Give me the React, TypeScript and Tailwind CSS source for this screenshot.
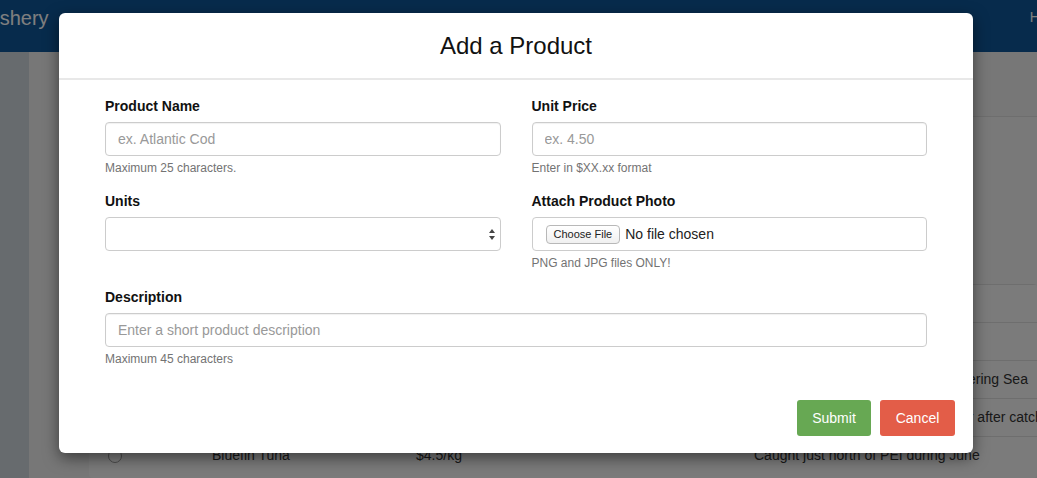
import React from 'react';

const rows = [
  { name: '', price: '', note: 'Caught off the coasts of Halifax, in' },
  { name: '', price: '', note: 'Farmed in New Brunswick' },
  { name: '', price: '', note: 'Wild caught in the cold, northern Bering Sea' },
  { name: '', price: '', note: 'Processed and frozen within 1 hour after catch' },
  { name: 'Bluefin Tuna', price: '$4.5/kg', note: 'Caught just north of PEI during June' },
];

const Field = ({ label, help, children }: { label: string; help?: string; children: React.ReactNode }) => (
  <div className="flex flex-col">
    <label className="text-[14px] font-bold leading-[20px] text-[#111]">{label}</label>
    <div className="mt-[6px]">{children}</div>
    {help && <p className="mt-[4px] text-[12px] leading-[16px] text-[#737373]">{help}</p>}
  </div>
);

const inputCls =
  'block w-full h-[34px] rounded-[4px] border border-[#cccccc] bg-white px-[12px] text-[14px] text-[#555] placeholder:text-[#999] outline-none shadow-[inset_0_1px_1px_rgba(0,0,0,0.06)]';

const ProductModal = () => (
  <div className="ml-[59px] mt-[13px] w-[914px] h-[440px] rounded-[6px] bg-white shadow-[0_5px_15px_rgba(0,0,0,0.5)] flex flex-col">
    {/* header */}
    <div className="h-[67px] border-b-2 border-[#e8e8e8] flex items-center justify-center">
      <h2 className="text-[24px] leading-[30px] text-[#111] pt-[1px]">Add a Product</h2>
    </div>

    {/* body */}
    <div className="px-[46px] pt-[16px]">
      <div className="grid grid-cols-2 gap-x-[31px]">
        <Field label="Product Name" help="Maximum 25 characters.">
          <input className={inputCls} placeholder="ex. Atlantic Cod" />
        </Field>
        <Field label="Unit Price" help="Enter in $XX.xx format">
          <input className={inputCls} placeholder="ex. 4.50" />
        </Field>
      </div>

      <div className="grid grid-cols-2 gap-x-[31px] mt-[15px]">
        <Field label="Units">
          <div className="relative h-[34px] rounded-[4px] border border-[#cccccc] bg-white">
            <svg className="absolute right-[4px] top-[10px]" width="8" height="13" viewBox="0 0 8 13">
              <path d="M4 1 L7 5 L1 5 Z" fill="#444" />
              <path d="M4 12 L7 8 L1 8 Z" fill="#444" />
            </svg>
          </div>
        </Field>
        <Field label="Attach Product Photo" help="PNG and JPG files ONLY!">
          <div className="h-[34px] rounded-[4px] border border-[#cccccc] bg-white flex items-center pl-[13px]">
            <span className="h-[19px] px-[7px] rounded-[4px] border border-[#b8b8b8] bg-gradient-to-b from-white to-[#f0f0f0] text-[11px] leading-[17px] text-[#222]">
              Choose File
            </span>
            <span className="ml-[5px] text-[14px] text-[#222]">No file chosen</span>
          </div>
        </Field>
      </div>

      <div className="mt-[16px]">
        <Field label="Description" help="Maximum 45 characters">
          <input className={inputCls} placeholder="Enter a short product description" />
        </Field>
      </div>
    </div>

    {/* footer */}
    <div className="mt-auto mb-[17px] pr-[18px] flex justify-end gap-[9px]">
      <button className="h-[36px] w-[74px] rounded-[3px] bg-[#67a853] text-[14px] text-white">Submit</button>
      <button className="h-[36px] w-[75px] rounded-[3px] bg-[#e35d48] text-[14px] text-white">Cancel</button>
    </div>
  </div>
);

export default function App() {
  return (
    <div className="relative w-[1037px] h-[478px] overflow-hidden bg-[#eeeeee] font-['Liberation_Sans',Arial,sans-serif]">
      {/* page behind the dialog */}
      <div className="flex flex-col h-full">
        <div className="h-[53px] bg-[#0e5698] flex items-center justify-between">
          <span className="-ml-[17px] text-[20px] text-white -mt-[17px]">Fishery</span>
          <span className="-mr-[30px] text-[14px] text-white -mt-[18px]">Home</span>
        </div>
        <div className="flex flex-1 min-w-0">
          <div className="w-[29px] shrink-0 bg-[#ced6dc]" />
          <div className="flex-1 min-w-0 pl-[60px] pt-[64px]">
            <div className="h-[168px] border-t border-[#dddddd] bg-[#f2f2f2]" />
            <div className="bg-[#f6f6f6] rounded-[4px] pb-[4px] overflow-hidden">
              {rows.map((r, i) => (
                <div key={i} className="h-[38px] border-t border-[#dddddd] flex items-center text-[14px] text-[#333]">
                  <span className="ml-[19px] shrink-0 w-[14px] h-[14px] rounded-full border border-[#999] bg-white" />
                  <span className="ml-[90px] shrink-0 w-[204px]">{r.name}</span>
                  <span className="shrink-0 w-[338px]">{r.price}</span>
                  <span className="shrink-0 whitespace-nowrap">{r.note}</span>
                </div>
              ))}
            </div>
          </div>
        </div>
      </div>

      {/* backdrop + modal */}
      <div className="absolute inset-0 bg-black/50">
        <ProductModal />
      </div>
    </div>
  );
}
